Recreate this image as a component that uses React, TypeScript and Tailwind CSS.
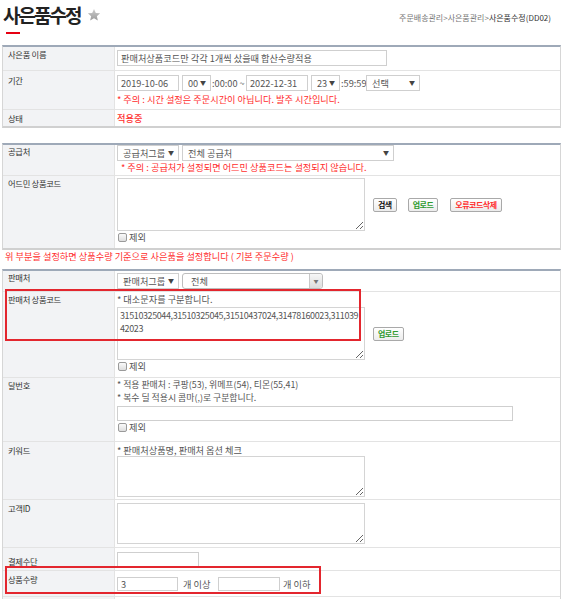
import type { ReactNode } from "react";

type RowProps = {
  label: string;
  className: string;
  labelClassName?: string;
  children?: ReactNode;
  last?: boolean;
};

function Row({ label, className, labelClassName = "pt-[1px]", children, last }: RowProps) {
  return (
    <div className={`relative flex ${last ? "" : "border-b border-[#e3e3e3]"} ${className}`}>
      <div
        className={`w-[112px] shrink-0 border-r border-[#e3e3e3] bg-[#f2f3f5] pl-[5px] text-[8.3px] leading-[12px] tracking-[-0.3px] text-[#333] ${labelClassName}`}
      >
        {label}
      </div>
      <div className="min-w-0 flex-1 pl-[2px]">{children}</div>
    </div>
  );
}

function Select({ className, children }: { className: string; children: ReactNode }) {
  return (
    <div
      className={`flex h-[16px] items-center justify-between border border-[#cfcfcf] bg-white pl-[5px] pr-[4px] text-[#555] ${className}`}
    >
      <span>{children}</span>
      <span className="text-[6px] text-[#444]">▼</span>
    </div>
  );
}

function Check() {
  return (
    <label className="flex h-[12px] items-center gap-[2px] pl-[1px] text-[#555]">
      <span className="h-[9px] w-[9px] rounded-[2px] border border-[#9a9a9a] bg-gradient-to-b from-[#fafafa] to-[#dedede]" />
      <span>제외</span>
    </label>
  );
}

function Btn({ className, children }: { className: string; children: ReactNode }) {
  return (
    <button
      type="button"
      className={`flex h-[14px] items-center rounded-[2px] border border-[#a9a9a9] bg-gradient-to-b from-white to-[#ececec] px-[4px] text-[8px] font-bold tracking-[-0.5px] ${className}`}
    >
      {children}
    </button>
  );
}

function Star() {
  return (
    <svg viewBox="0 0 24 24" className="h-[14px] w-[14px]">
      <defs>
        <linearGradient id="star-g" x1="0" y1="0" x2="0" y2="1">
          <stop offset="0" stopColor="#cdcdcd" />
          <stop offset="1" stopColor="#9b9b9b" />
        </linearGradient>
      </defs>
      <path
        d="M12 1.5l3.1 6.9 7.4.7-5.6 5 1.7 7.4L12 17.6 5.4 21.5l1.7-7.4-5.6-5 7.4-.7z"
        fill="url(#star-g)"
      />
    </svg>
  );
}

const field = "border border-[#cfcfcf] bg-white px-[3px] text-[#555] outline-none";
const area = "resize border border-[#d4d4d4] bg-white px-[2px] py-[1px] text-[#555] outline-none";
const note = "leading-[12px] text-[#ff2d2d]";

export default function App() {
  return (
    <div className="min-h-screen bg-white font-['Noto_Sans_CJK_KR',sans-serif] text-[9.2px] leading-[12px] text-[#333]">
      <div className="flex h-[45px] items-start justify-between pl-[3px] pr-[10px] pt-[3px]">
        <div>
          <div className="flex items-center gap-[7px]">
            <h1 className="text-[19px] font-bold leading-[24px] tracking-[-2px] text-[#222]">사은품수정</h1>
            <Star />
          </div>
          <div className="ml-[3px] mt-[5px] h-[2px] w-[14px] bg-[#e60012]" />
        </div>
        <p className="pt-[9px] text-[8px] text-[#777]">
          주문배송관리&gt;사은품관리&gt;<span className="text-[#333]">사은품수정(DD02)</span>
        </p>
      </div>

      <div className="ml-[2px] border-x border-t-2 border-b-2 border-x-[#d6d6d6] border-t-[#9ea9b8] border-b-[#d0d0d0]">
        <Row label="사은품 이름" className="h-[24px]">
          <input
            readOnly
            value="판매처상품코드만 각각 1개씩 샀을때 합산수량적용"
            className={`mt-[3px] h-[16px] w-[270px] ${field}`}
          />
        </Row>
        <Row label="기간" className="h-[39px]" labelClassName="pt-[3px]">
          <div className="mt-[4px] flex items-center text-[#555]">
            <input readOnly value="2019-10-06" className={`h-[16px] w-[62px] ${field}`} />
            <Select className="ml-[3px] w-[29px]">00</Select>
            <span className="ml-[1px] w-[34px]">:00:00 ~</span>
            <input readOnly value="2022-12-31" className={`h-[16px] w-[62px] ${field}`} />
            <Select className="ml-[3px] w-[29px]">23</Select>
            <span className="ml-[1px] w-[25px]">:59:59</span>
            <Select className="w-[54px]">선택</Select>
          </div>
          <p className={`mt-[2px] ${note}`}>* 주의 : 시간 설정은 주문시간이 아닙니다. 발주 시간입니다.</p>
        </Row>
        <Row label="상태" className="h-[16px]" labelClassName="pt-[2px]" last>
          <p className="pt-[2px] font-medium text-[#ff2d2d]">적용중</p>
        </Row>
      </div>

      <div className="ml-[2px] mt-[15px] border-x border-t-2 border-b-2 border-x-[#d6d6d6] border-t-[#9ea9b8] border-b-[#d0d0d0]">
        <Row label="공급처" className="h-[31px]" labelClassName="pt-[0px]">
          <div className="flex items-center">
            <Select className="w-[62px]">공급처그룹</Select>
            <Select className="ml-[3px] w-[212px]">전체 공급처</Select>
          </div>
          <p className={`pl-[4px] ${note}`}>* 주의 : 공급처가 설정되면 어드민 상품코드는 설정되지 않습니다.</p>
        </Row>
        <Row label="어드민 상품코드" className="h-[72px]" labelClassName="pt-[1px]" last>
          <div className="mt-[2px] flex items-center">
            <textarea readOnly className={`h-[53px] w-[248px] ${area}`} />
            <Btn className="ml-[8px] text-[#111]">검색</Btn>
            <Btn className="ml-[11px] text-[#2e9a2e]">업로드</Btn>
            <Btn className="ml-[12px] text-[#ff2d2d]">오류코드삭제</Btn>
          </div>
          <Check />
        </Row>
      </div>

      <p className={`h-[19px] pl-[5px] ${note}`}>
        위 부분을 설정하면 상품수량 기준으로 사은품을 설정합니다 ( 기본 주문수량 )
      </p>

      <div className="ml-[2px] border-x border-t-2 border-x-[#d6d6d6] border-t-[#9ea9b8]">
        <Row label="판매처" className="h-[21px]" labelClassName="pt-[0px]">
          <div className="mt-[2px] flex items-center">
            <Select className="w-[62px]">판매처그룹</Select>
            <div className="ml-[3px] flex h-[16px] w-[141px] items-center justify-between rounded-[3px] border border-[#bdbdbd] bg-white text-[#555]">
              <span className="pl-[8px]">전체</span>
              <span className="flex h-full w-[13px] items-center justify-center rounded-r-[3px] border-l border-[#c8c8c8] bg-gradient-to-b from-[#f7f7f7] to-[#dcdcdc] text-[5px] text-[#777]">
                ▼
              </span>
            </div>
          </div>
        </Row>
        <Row label="판매처 상품코드" className="h-[86px]">
          <p className="pt-[1px] text-[#555]">* 대소문자를 구분합니다.</p>
          <div className="mt-[2px] flex items-center">
            <textarea
              readOnly
              value="31510325044,31510325045,31510437024,31478160023,31103942023"
              className={`h-[53px] w-[248px] break-all text-[9px] leading-[13px] tracking-[-0.4px] ${area}`}
            />
            <Btn className="ml-[8px] text-[#2e9a2e]">업로드</Btn>
          </div>
          <Check />
          <div className="pointer-events-none absolute left-[2px] top-[-3px] h-[52px] w-[356px] border-2 border-[#e3262e]" />
        </Row>
        <Row label="달번호" className="h-[64px]">
          <div className="text-[8.9px] leading-[13px] text-[#555]">
            <p>* 적용 판매처 : 쿠팡(53), 위메프(54), 티몬(55,41)</p>
            <p>* 복수 딜 적용시 콤마(,)로 구분합니다.</p>
          </div>
          <input readOnly value="" className={`mt-[2px] h-[15px] w-[396px] ${field}`} />
          <Check />
        </Row>
        <Row label="키워드" className="h-[58px]" labelClassName="pt-[2px]">
          <p className="pt-[2px] text-[#555]">* 판매처상품명, 판매처 옵션 체크</p>
          <textarea readOnly className={`block h-[41px] w-[248px] ${area}`} />
        </Row>
        <Row label="고객ID" className="h-[48px]" labelClassName="pt-[2px]">
          <textarea readOnly className={`mt-[3px] block h-[41px] w-[248px] ${area}`} />
        </Row>
        <Row label="결제수단" className="h-[23px]" labelClassName="pt-[7px]">
          <input readOnly value="" className={`mt-[4px] h-[15px] w-[82px] ${field}`} />
        </Row>
        <Row label="상품수량" className="h-[26px]" labelClassName="pt-[2px]">
          <div className="mt-[6px] flex items-center text-[#555]">
            <input readOnly value="3" className={`h-[14px] w-[61px] ${field}`} />
            <span className="ml-[5px] w-[35px]">개 이상</span>
            <input readOnly value="" className={`h-[14px] w-[62px] ${field}`} />
            <span className="ml-[3px]">개 이하</span>
          </div>
          <div className="pointer-events-none absolute left-[2px] top-[-5px] h-[28px] w-[316px] border-2 border-[#e3262e]" />
        </Row>
        <Row label="" className="h-[24px]" />
      </div>
    </div>
  );
}
